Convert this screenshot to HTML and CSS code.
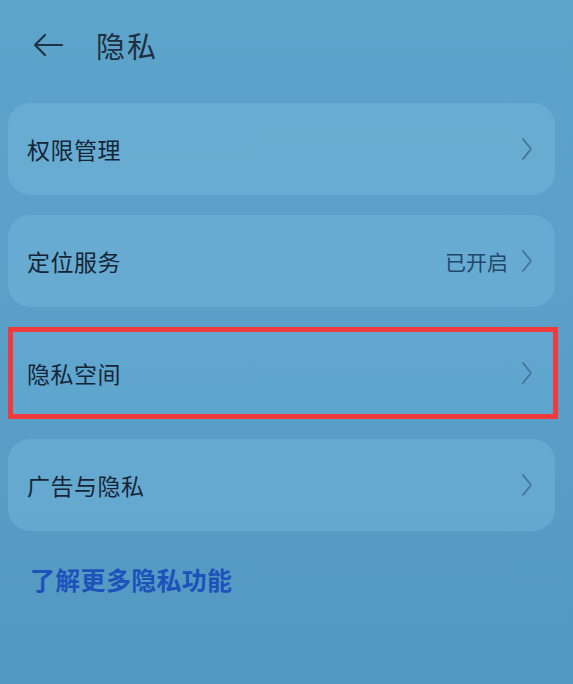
FILE: index.html
```html
<!DOCTYPE html>
<html lang="zh-CN">
<head>
    <meta charset="UTF-8">
    <meta name="viewport" content="width=device-width, initial-scale=1.0">
    <title>隐私</title>
    <link rel="stylesheet" href="styles.css">
</head>
<body>
    <div class="page">
        <header class="top-bar">
            <svg class="back" width="32" height="24" viewBox="0 0 32 24">
                <path d="M30 12H3M13 2L3 12l10 10" fill="none" stroke="#1e3346" stroke-width="2.2" stroke-linecap="round" stroke-linejoin="round"/>
            </svg>
            <h1 class="title">隐私</h1>
        </header>

        <div class="list">
            <div class="row">
                <span class="label">权限管理</span>
                <svg class="chevron" width="12" height="24" viewBox="0 0 12 24"><path d="M2 2l8 10-8 10"/></svg>
            </div>
            <div class="row">
                <span class="label">定位服务</span>
                <span class="value">已开启</span>
                <svg class="chevron" width="12" height="24" viewBox="0 0 12 24"><path d="M2 2l8 10-8 10"/></svg>
            </div>
            <div class="row highlight">
                <span class="label">隐私空间</span>
                <svg class="chevron" width="12" height="24" viewBox="0 0 12 24"><path d="M2 2l8 10-8 10"/></svg>
            </div>
            <div class="row">
                <span class="label">广告与隐私</span>
                <svg class="chevron" width="12" height="24" viewBox="0 0 12 24"><path d="M2 2l8 10-8 10"/></svg>
            </div>
        </div>

        <a class="more" href="#">了解更多隐私功能</a>
    </div>
</body>
</html>
```

FILE: styles.css
```css
* {
    margin: 0;
    padding: 0;
    box-sizing: border-box;
}

body {
    font-family: "Noto Sans CJK SC", "Noto Sans", sans-serif;
    background: linear-gradient(180deg, #5da4cb 0%, #589ec6 60%, #5299c3 100%);
    color: #1b2b3b;
    min-height: 100vh;
}

.page {
    width: 573px;
    height: 684px;
    overflow: hidden;
}

.top-bar {
    display: flex;
    align-items: center;
    height: 90px;
    padding: 0 0 0 32px;
}

.back {
    flex-shrink: 0;
}

.title {
    margin-left: 32px;
    font-size: 29px;
    font-weight: 400;
    color: #1e2f40;
    letter-spacing: 2px;
}

.list {
    display: flex;
    flex-direction: column;
    gap: 20px;
    margin-top: 13px;
    padding: 0 18px 0 8px;
}

.row {
    display: flex;
    align-items: center;
    height: 92px;
    padding: 0 22px 0 19px;
    background: rgba(120, 185, 222, 0.45);
    border-radius: 22px;
}

.row.highlight {
    margin-right: -3px;
    border: 5px solid #f03a3c;
    border-radius: 0;
    padding-left: 14px;
    padding-right: 20px;
    background: rgba(110, 180, 220, 0.35);
}

.label {
    flex: 1;
    font-size: 23px;
    letter-spacing: 0.5px;
    color: #152536;
}

.value {
    font-size: 21px;
    color: #22486a;
    margin-right: 13px;
}

.chevron {
    flex-shrink: 0;
}

.chevron path {
    fill: none;
    stroke: #44739a;
    stroke-width: 1.8;
    stroke-linecap: round;
    stroke-linejoin: round;
}

.more {
    display: block;
    margin: 30px 0 0 30px;
    font-size: 25px;
    font-weight: 700;
    color: #1d52bb;
    text-decoration: none;
    letter-spacing: 0.3px;
}
```
